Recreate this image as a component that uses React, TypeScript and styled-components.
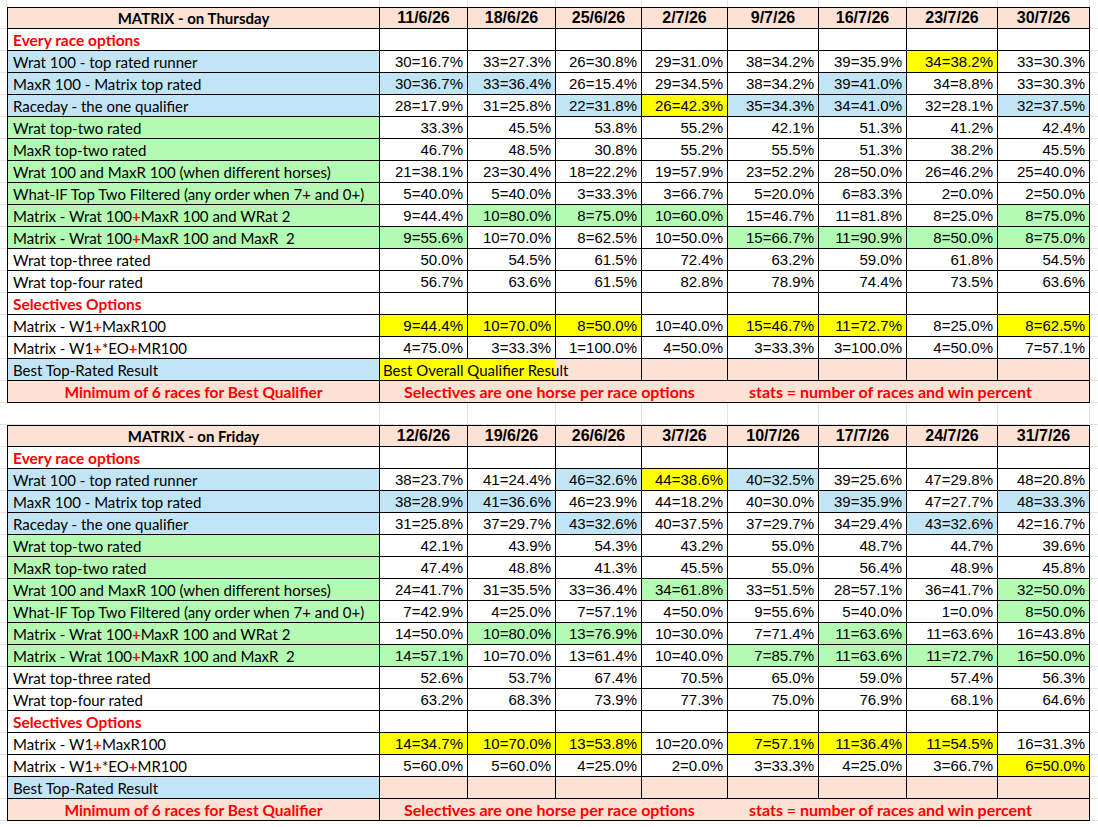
import React from "react";
import styled, { createGlobalStyle, css } from "styled-components";

const GlobalStyle = createGlobalStyle`
  html, body { margin: 0; padding: 0; background: #ffffff; }
  body { font-family: "Liberation Sans", Arial, sans-serif; color: #000; }
`;

type Fill = "w" | "b" | "g" | "y" | "p";

const fills: Record<Fill, string> = {
  w: "#ffffff",
  b: "#c1e5f5",
  g: "#b3fbb3",
  y: "#ffff00",
  p: "#fbe2d5",
};

const LABEL_FONT = `"Lato", "Noto Sans", "Liberation Sans", sans-serif`;
const NUM_FONT = `"Liberation Sans", Arial, sans-serif`;
const RED = "#ff0000";
const FAINT = "#e2e2e2";

const Sheet = styled.div`
  display: grid;
  grid-template-columns: 7px 373px 88px 88px 86px 86px 91px 88px 91px 92px 1fr;
  grid-auto-rows: 22px;
  grid-template-rows: 7px;
  width: 1098px;
  height: 827px;
  overflow: hidden;
`;

const Blank = styled.div<{ $right?: boolean; $bottom?: boolean }>`
  box-sizing: border-box;
  ${(p) => p.$right && css`border-right: 1px solid ${FAINT};`}
  ${(p) => p.$bottom && css`border-bottom: 1px solid ${FAINT};`}
`;

const Cell = styled.div<{ $fill?: Fill; $top?: boolean; $span?: number }>`
  box-sizing: border-box;
  border-right: 1px solid #000;
  border-bottom: 1px solid #000;
  ${(p) => p.$top && css`border-top: 1px solid #000;`}
  background: ${(p) => fills[p.$fill ?? "w"]};
  ${(p) => p.$span && css`grid-column: span ${p.$span};`}
  display: flex;
  align-items: center;
  min-width: 0;
  white-space: nowrap;
`;

const LabelCell = styled(Cell)`
  border-left: 1px solid #000;
  padding-left: 5px;
  font-family: ${LABEL_FONT};
  font-size: 15px;
`;

const SectionCell = styled(LabelCell)`
  color: ${RED};
  font-weight: 700;
  font-size: 15.5px;
`;

const HeadLabel = styled(LabelCell)`
  justify-content: center;
  padding-left: 0;
  font-weight: 700;
  font-size: 15px;
`;

const DateCell = styled(Cell)`
  justify-content: center;
  font-family: ${NUM_FONT};
  font-weight: 700;
  font-size: 16px;
`;

const ValueCell = styled(Cell)`
  justify-content: flex-end;
  padding-right: 4px;
  font-family: ${NUM_FONT};
  font-size: 15px;
`;

const Plus = styled.span`
  color: ${RED};
  font-weight: 700;
`;

const QualifierCell = styled(Cell)`
  background: linear-gradient(to right, ${fills.y} 0 175px, ${fills.p} 175px);
  padding-left: 3px;
  font-family: ${LABEL_FONT};
  font-size: 15px;
`;

const NoteLeft = styled(LabelCell)`
  justify-content: center;
  padding-left: 0;
  color: ${RED};
  font-weight: 700;
  font-size: 15.5px;
`;

const NoteRight = styled(Cell)`
  padding-left: 24px;
  color: ${RED};
  font-family: ${LABEL_FONT};
  font-weight: 700;
  font-size: 16px;
`;

const NoteText = styled.span<{ $w?: number }>`
  display: inline-block;
  ${(p) => p.$w && css`width: ${p.$w}px;`}
`;

type DataRow = { label: React.ReactNode; fill: Fill; values: string[] };

type Table = {
  title: string;
  dates: string[];
  rows1: DataRow[];
  rows2: DataRow[];
  qualifier: boolean;
};

const parse = (v: string): [string, Fill] => {
  const [text, f] = v.split("|");
  return [text, (f as Fill) || "w"];
};

const plusLabel = (a: string, b: string, c?: string) => (
  <>
    {a}
    <Plus>+</Plus>
    {b}
    {c !== undefined && (
      <>
        <Plus>+</Plus>
        {c}
      </>
    )}
  </>
);

const thursday: Table = {
  title: "MATRIX - on Thursday",
  dates: ["11/6/26", "18/6/26", "25/6/26", "2/7/26", "9/7/26", "16/7/26", "23/7/26", "30/7/26"],
  rows1: [
    { label: "Wrat 100 - top rated runner", fill: "b", values: ["30=16.7%", "33=27.3%", "26=30.8%", "29=31.0%", "38=34.2%", "39=35.9%", "34=38.2%|y", "33=30.3%"] },
    { label: "MaxR 100 - Matrix top rated", fill: "b", values: ["30=36.7%|b", "33=36.4%|b", "26=15.4%", "29=34.5%", "38=34.2%", "39=41.0%|b", "34=8.8%", "33=30.3%"] },
    { label: "Raceday - the one qualifier", fill: "b", values: ["28=17.9%", "31=25.8%", "22=31.8%|b", "26=42.3%|y", "35=34.3%|b", "34=41.0%|b", "32=28.1%", "32=37.5%|b"] },
    { label: "Wrat top-two rated", fill: "g", values: ["33.3%", "45.5%", "53.8%", "55.2%", "42.1%", "51.3%", "41.2%", "42.4%"] },
    { label: "MaxR top-two rated", fill: "g", values: ["46.7%", "48.5%", "30.8%", "55.2%", "55.5%", "51.3%", "38.2%", "45.5%"] },
    { label: "Wrat 100 and MaxR 100 (when different horses)", fill: "g", values: ["21=38.1%", "23=30.4%", "18=22.2%", "19=57.9%", "23=52.2%", "28=50.0%", "26=46.2%", "25=40.0%"] },
    { label: "What-IF Top Two Filtered (any order when 7+ and 0+)", fill: "g", values: ["5=40.0%", "5=40.0%", "3=33.3%", "3=66.7%", "5=20.0%", "6=83.3%", "2=0.0%", "2=50.0%"] },
    { label: plusLabel("Matrix - Wrat 100", "MaxR 100 and WRat 2"), fill: "g", values: ["9=44.4%", "10=80.0%|g", "8=75.0%|g", "10=60.0%|g", "15=46.7%", "11=81.8%", "8=25.0%", "8=75.0%|g"] },
    { label: plusLabel("Matrix - Wrat 100", "MaxR 100 and MaxR\u00a0 2"), fill: "g", values: ["9=55.6%|g", "10=70.0%", "8=62.5%", "10=50.0%", "15=66.7%|g", "11=90.9%|g", "8=50.0%|g", "8=75.0%|g"] },
    { label: "Wrat top-three rated", fill: "w", values: ["50.0%", "54.5%", "61.5%", "72.4%", "63.2%", "59.0%", "61.8%", "54.5%"] },
    { label: "Wrat top-four rated", fill: "w", values: ["56.7%", "63.6%", "61.5%", "82.8%", "78.9%", "74.4%", "73.5%", "63.6%"] },
  ],
  rows2: [
    { label: plusLabel("Matrix - W1", "MaxR100"), fill: "w", values: ["9=44.4%|y", "10=70.0%|y", "8=50.0%|y", "10=40.0%", "15=46.7%|y", "11=72.7%|y", "8=25.0%", "8=62.5%|y"] },
    { label: plusLabel("Matrix - W1", "*EO", "MR100"), fill: "w", values: ["4=75.0%", "3=33.3%", "1=100.0%", "4=50.0%", "3=33.3%", "3=100.0%", "4=50.0%", "7=57.1%"] },
  ],
  qualifier: true,
};

const friday: Table = {
  title: "MATRIX - on Friday",
  dates: ["12/6/26", "19/6/26", "26/6/26", "3/7/26", "10/7/26", "17/7/26", "24/7/26", "31/7/26"],
  rows1: [
    { label: "Wrat 100 - top rated runner", fill: "b", values: ["38=23.7%", "41=24.4%", "46=32.6%|b", "44=38.6%|y", "40=32.5%|b", "39=25.6%", "47=29.8%", "48=20.8%"] },
    { label: "MaxR 100 - Matrix top rated", fill: "b", values: ["38=28.9%|b", "41=36.6%|b", "46=23.9%", "44=18.2%", "40=30.0%", "39=35.9%|b", "47=27.7%", "48=33.3%|b"] },
    { label: "Raceday - the one qualifier", fill: "b", values: ["31=25.8%", "37=29.7%", "43=32.6%|b", "40=37.5%", "37=29.7%", "34=29.4%", "43=32.6%|b", "42=16.7%"] },
    { label: "Wrat top-two rated", fill: "g", values: ["42.1%", "43.9%", "54.3%", "43.2%", "55.0%", "48.7%", "44.7%", "39.6%"] },
    { label: "MaxR top-two rated", fill: "g", values: ["47.4%", "48.8%", "41.3%", "45.5%", "55.0%", "56.4%", "48.9%", "45.8%"] },
    { label: "Wrat 100 and MaxR 100 (when different horses)", fill: "g", values: ["24=41.7%", "31=35.5%", "33=36.4%", "34=61.8%|g", "33=51.5%", "28=57.1%", "36=41.7%", "32=50.0%|g"] },
    { label: "What-IF Top Two Filtered (any order when 7+ and 0+)", fill: "g", values: ["7=42.9%", "4=25.0%", "7=57.1%", "4=50.0%", "9=55.6%", "5=40.0%", "1=0.0%", "8=50.0%|g"] },
    { label: plusLabel("Matrix - Wrat 100", "MaxR 100 and WRat 2"), fill: "g", values: ["14=50.0%", "10=80.0%|g", "13=76.9%|g", "10=30.0%", "7=71.4%", "11=63.6%|g", "11=63.6%", "16=43.8%"] },
    { label: plusLabel("Matrix - Wrat 100", "MaxR 100 and MaxR\u00a0 2"), fill: "g", values: ["14=57.1%|g", "10=70.0%", "13=61.4%", "10=40.0%", "7=85.7%|g", "11=63.6%|g", "11=72.7%|g", "16=50.0%|g"] },
    { label: "Wrat top-three rated", fill: "w", values: ["52.6%", "53.7%", "67.4%", "70.5%", "65.0%", "59.0%", "57.4%", "56.3%"] },
    { label: "Wrat top-four rated", fill: "w", values: ["63.2%", "68.3%", "73.9%", "77.3%", "75.0%", "76.9%", "68.1%", "64.6%"] },
  ],
  rows2: [
    { label: plusLabel("Matrix - W1", "MaxR100"), fill: "w", values: ["14=34.7%|y", "10=70.0%|y", "13=53.8%|y", "10=20.0%", "7=57.1%|y", "11=36.4%|y", "11=54.5%|y", "16=31.3%"] },
    { label: plusLabel("Matrix - W1", "*EO", "MR100"), fill: "w", values: ["5=60.0%", "5=60.0%", "4=25.0%", "2=0.0%", "3=33.3%", "4=25.0%", "3=66.7%", "6=50.0%|y"] },
  ],
  qualifier: false,
};

const Edge = ({ children }: { children: React.ReactNode }) => (
  <>
    <Blank $bottom />
    {children}
    <Blank $bottom />
  </>
);

const renderRow = (r: DataRow, key: string) => (
  <Edge key={key}>
    <LabelCell $fill={r.fill}>{r.label}</LabelCell>
    {r.values.map((v, i) => {
      const [t, f] = parse(v);
      return (
        <ValueCell key={i} $fill={f}>
          {t}
        </ValueCell>
      );
    })}
  </Edge>
);

const EmptyRow = ({ n }: { n: number }) => (
  <>
    {Array.from({ length: n }).map((_, i) => (
      <Cell key={i} />
    ))}
  </>
);

const TableBlock = ({ t, id }: { t: Table; id: string }) => (
  <>
    <Edge>
      <HeadLabel $fill="p" $top>
        {t.title}
      </HeadLabel>
      {t.dates.map((d) => (
        <DateCell key={d} $fill="p" $top>
          {d}
        </DateCell>
      ))}
    </Edge>
    <Edge>
      <SectionCell>Every race options</SectionCell>
      <EmptyRow n={8} />
    </Edge>
    {t.rows1.map((r, i) => renderRow(r, `${id}a${i}`))}
    <Edge>
      <SectionCell>Selectives Options</SectionCell>
      <EmptyRow n={8} />
    </Edge>
    {t.rows2.map((r, i) => renderRow(r, `${id}b${i}`))}
    <Edge>
      <LabelCell $fill="b">Best Top-Rated Result</LabelCell>
      {t.qualifier ? (
        <>
          <QualifierCell $span={3}>Best Overall Qualifier Result</QualifierCell>
          {Array.from({ length: 5 }).map((_, i) => (
            <Cell key={i} $fill="p" />
          ))}
        </>
      ) : (
        Array.from({ length: 8 }).map((_, i) => <Cell key={i} $fill="p" />)
      )}
    </Edge>
    <Edge>
      <NoteLeft $fill="p">Minimum of 6 races for Best Qualifier</NoteLeft>
      <NoteRight $fill="p" $span={8}>
        <NoteText $w={345}>Selectives are one horse per race options</NoteText>
        <NoteText>stats = number of races and win percent</NoteText>
      </NoteRight>
    </Edge>
  </>
);

const StripRow = () => (
  <>
    <Blank $right />
    {Array.from({ length: 9 }).map((_, i) => (
      <Blank key={i} $right />
    ))}
    <Blank />
  </>
);

const GapRow = () => (
  <>
    <Blank $bottom />
    {Array.from({ length: 9 }).map((_, i) => (
      <Blank key={i} $right $bottom />
    ))}
    <Blank $bottom />
  </>
);

export default function App() {
  return (
    <>
      <GlobalStyle />
      <Sheet>
        <StripRow />
        <TableBlock t={thursday} id="th" />
        <GapRow />
        <TableBlock t={friday} id="fr" />
      </Sheet>
    </>
  );
}
